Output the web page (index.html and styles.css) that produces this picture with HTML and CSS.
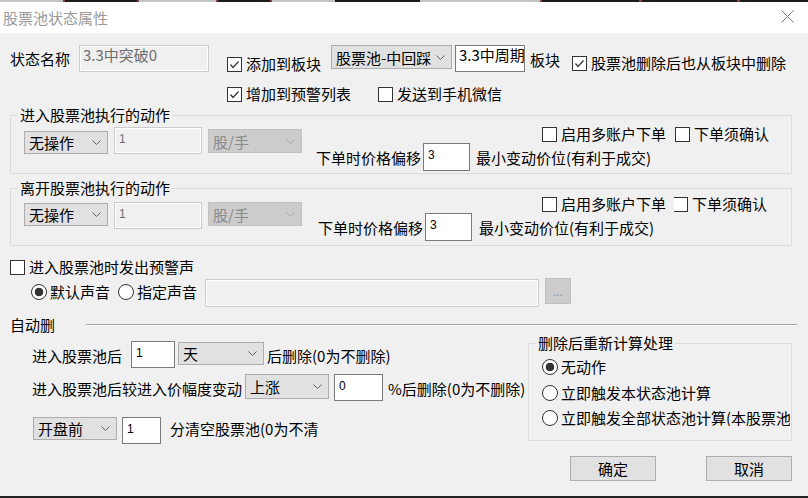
FILE: index.html
```html
<!DOCTYPE html>
<html lang="zh-CN">
<head>
<meta charset="utf-8">
<title>股票池状态属性</title>
<link rel="stylesheet" href="styles.css">
</head>
<body>
<div class="strip"></div>
<div class="titlebar">
  <span class="title">股票池状态属性</span>
  <svg class="close" width="13" height="13" viewBox="0 0 13 13"><path d="M0.5 0.5 L12.5 12.5 M12.5 0.5 L0.5 12.5" stroke="#7a7a7a" stroke-width="1" fill="none"/></svg>
</div>
<div class="dialog">
  <div class="row r1">
    <span class="lbl name-lbl">状态名称</span>
    <div class="inp dis name-inp">3.3中突破0</div>
    <div class="chk add-board"><span class="cb"><svg width="13" height="13" viewBox="0 0 13 13"><path d="M2.5 6.5 L5 9.5 L10.5 3.5" stroke="#333" stroke-width="1.2" fill="none"/></svg></span><span>添加到板块</span></div>
    <div class="sel board-sel"><span>股票池-中回踩</span><svg class="chev" width="9" height="5" viewBox="0 0 9 5"><path d="M0.5 0.5 L4.5 4.5 L8.5 0.5" stroke="#606060" fill="none"/></svg></div>
    <div class="inp period-inp">3.3中周期</div>
    <span class="lbl board-lbl">板块</span>
    <div class="chk del-too"><span class="cb"><svg width="13" height="13" viewBox="0 0 13 13"><path d="M2.5 6.5 L5 9.5 L10.5 3.5" stroke="#333" stroke-width="1.2" fill="none"/></svg></span><span>股票池删除后也从板块中删除</span></div>
  </div>

  <div class="row r2">
    <div class="chk warn-list"><span class="cb"><svg width="13" height="13" viewBox="0 0 13 13"><path d="M2.5 6.5 L5 9.5 L10.5 3.5" stroke="#333" stroke-width="1.2" fill="none"/></svg></span><span>增加到预警列表</span></div>
    <div class="chk wx"><span class="cb"></span><span>发送到手机微信</span></div>
  </div>

  <fieldset class="grp g1">
    <legend>进入股票池执行的动作</legend>
    <div class="gbody">
      <div class="sel s-act"><span>无操作</span><svg class="chev" width="9" height="5" viewBox="0 0 9 5"><path d="M0.5 0.5 L4.5 4.5 L8.5 0.5" stroke="#606060" fill="none"/></svg></div>
      <div class="inp dis num s-qty">1</div>
      <div class="sel dis s-unit"><span>股/手</span><svg class="chev" width="9" height="5" viewBox="0 0 9 5"><path d="M0.5 0.5 L4.5 4.5 L8.5 0.5" stroke="#a8a8a8" fill="none"/></svg></div>
      <div class="right">
        <div class="chkrow">
          <div class="chk"><span class="cb"></span><span>启用多账户下单</span></div>
          <div class="chk confirm"><span class="cb"></span><span>下单须确认</span></div>
        </div>
        <div class="offrow">
          <span class="lbl">下单时价格偏移</span>
          <div class="inp num off-inp">3</div>
          <span class="lbl tick-lbl">最小变动价位(有利于成交)</span>
        </div>
      </div>
    </div>
  </fieldset>

  <fieldset class="grp g2">
    <legend>离开股票池执行的动作</legend>
    <div class="gbody">
      <div class="sel s-act"><span>无操作</span><svg class="chev" width="9" height="5" viewBox="0 0 9 5"><path d="M0.5 0.5 L4.5 4.5 L8.5 0.5" stroke="#606060" fill="none"/></svg></div>
      <div class="inp dis num s-qty">1</div>
      <div class="sel dis s-unit"><span>股/手</span><svg class="chev" width="9" height="5" viewBox="0 0 9 5"><path d="M0.5 0.5 L4.5 4.5 L8.5 0.5" stroke="#a8a8a8" fill="none"/></svg></div>
      <div class="right">
        <div class="chkrow">
          <div class="chk"><span class="cb"></span><span>启用多账户下单</span></div>
          <div class="chk confirm"><span class="cb cut"></span><span>下单须确认</span></div>
        </div>
        <div class="offrow">
          <span class="lbl">下单时价格偏移</span>
          <div class="inp num off-inp">3</div>
          <span class="lbl tick-lbl">最小变动价位(有利于成交)</span>
        </div>
      </div>
    </div>
  </fieldset>

  <div class="chk sound-chk"><span class="cb"></span><span>进入股票池时发出预警声</span></div>

  <div class="row sound-row">
    <div class="rad r-default"><span class="rd on"></span><span>默认声音</span></div>
    <div class="rad r-custom"><span class="rd"></span><span>指定声音</span></div>
    <div class="inp dis path-inp"></div>
    <div class="dots">...</div>
  </div>

  <div class="row auto-row">
    <span class="auto-lbl">自动删</span>
    <div class="sep"></div>
  </div>

  <div class="bottom">
    <div class="lcol">
      <div class="row ra">
        <span class="lbl ra-lbl">进入股票池后</span>
        <div class="inp num ra-inp">1</div>
        <div class="sel ra-sel"><span>天</span><svg class="chev" width="9" height="5" viewBox="0 0 9 5"><path d="M0.5 0.5 L4.5 4.5 L8.5 0.5" stroke="#606060" fill="none"/></svg></div>
        <span class="lbl ra-tail">后删除(0为不删除)</span>
      </div>
      <div class="row rb">
        <span class="lbl rb-lbl">进入股票池后较进入价幅度变动</span>
        <div class="sel rb-sel"><span>上涨</span><svg class="chev" width="9" height="5" viewBox="0 0 9 5"><path d="M0.5 0.5 L4.5 4.5 L8.5 0.5" stroke="#606060" fill="none"/></svg></div>
        <div class="inp num rb-inp">0</div>
        <span class="lbl rb-tail">%后删除(0为不删除)</span>
      </div>
      <div class="row rc">
        <div class="sel rc-sel"><span>开盘前</span><svg class="chev" width="9" height="5" viewBox="0 0 9 5"><path d="M0.5 0.5 L4.5 4.5 L8.5 0.5" stroke="#606060" fill="none"/></svg></div>
        <div class="inp num rc-inp">1</div>
        <span class="lbl rc-tail">分清空股票池(0为不清</span>
      </div>
    </div>
    <div class="rcol">
      <fieldset class="grp g3">
        <legend>删除后重新计算处理</legend>
        <div class="radlist">
          <div class="rad"><span class="rd on"></span><span>无动作</span></div>
          <div class="rad r2nd"><span class="rd"></span><span>立即触发本状态池计算</span></div>
          <div class="rad r3rd"><span class="rd"></span><span class="clip">立即触发全部状态池计算(本股票池</span></div>
        </div>
      </fieldset>
      <div class="btns">
        <div class="btn ok">确定</div>
        <div class="btn cancel">取消</div>
      </div>
    </div>
  </div>
</div>
<div class="bottomline"></div>
</body>
</html>
```
FILE: styles.css
```css
* { box-sizing: border-box; }
html, body { margin: 0; padding: 0; }
body {
  width: 808px;
  height: 498px;
  overflow: hidden;
  font-family: "Noto Sans CJK SC", "Microsoft YaHei", sans-serif;
  font-size: 15px;
  color: #000;
  background: #f0f0f0;
}

.strip {
  height: 2px;
  background: linear-gradient(to right,
    #c4c4c4 0, #c4c4c4 63px, #8a3c3c 63px, #8a3c3c 65px,
    #1c1c1c 65px, #1c1c1c 137px, #8a3c3c 137px, #8a3c3c 139px,
    #c4c4c4 139px, #c4c4c4 216px, #8a3c3c 216px, #8a3c3c 218px,
    #1c1c1c 218px, #1c1c1c 270px, #8a3c3c 270px, #8a3c3c 272px,
    #c4c4c4 272px, #c4c4c4 335px, #1c1c1c 335px, #1c1c1c 420px,
    #c4c4c4 420px, #c4c4c4 540px, #8a3c3c 540px, #8a3c3c 542px,
    #1c1c1c 542px, #1c1c1c 639px, #8a3c3c 639px, #8a3c3c 642px,
    #1c1c1c 642px, #1c1c1c 737px, #8a3c3c 737px, #8a3c3c 740px,
    #1c1c1c 740px);
}

.titlebar {
  height: 31px;
  background: #fff;
  display: flex;
  align-items: center;
  justify-content: space-between;
}
.title {
  color: #9a9a9a;
  margin-left: 3px;
  margin-top: 1px;
  line-height: 16px;
  white-space: nowrap;
}
.close { margin-right: 14px; margin-top: -2px; }

.dialog {
  height: 463px;
  background: #f0f0f0;
  display: flex;
  flex-direction: column;
}
.bottomline { height: 2px; background: #222; }

.row { display: flex; align-items: flex-start; }
.lbl { line-height: 27px; white-space: nowrap; }

/* inputs */
.inp {
  height: 27px;
  border: 1px solid #7a7a7a;
  background: #fff;
  padding: 0 3px;
  line-height: 18px;
  white-space: nowrap;
  overflow: hidden;
  flex: none;
}
.inp.num {
  font-family: "Liberation Sans", Arial, sans-serif;
  font-size: 12px;
  line-height: 14px;
  padding: 4px 4px;
}
.inp.dis {
  background: #f0f0f0;
  border-color: #cccccc;
  box-shadow: inset 0 0 0 1px #fff;
  color: #6d6d6d;
}

/* selects */
.sel {
  display: flex;
  align-items: center;
  justify-content: space-between;
  border: 1px solid #adadad;
  background: #e1e1e1;
  padding: 0 6px 0 4px;
  white-space: nowrap;
  flex: none;
}
.sel.dis { background: #cccccc; border-color: #c2c2c2; color: #8a8a8a; }
.chev { flex: none; }

/* checkbox / radio */
.chk, .rad {
  display: flex;
  align-items: center;
  line-height: 16px;
  white-space: nowrap;
  flex: none;
}
.cb {
  width: 15px;
  height: 15px;
  border: 1px solid #333;
  background: #fff;
  margin-right: 4px;
  flex: none;
  display: flex;
  align-items: center;
  justify-content: center;
}
.cb.cut { border-left: none; width: 14px; margin-left: 1px; }
.rd {
  width: 16px;
  height: 16px;
  border-radius: 50%;
  border: 1px solid #333;
  background: #fff;
  margin-right: 3px;
  flex: none;
}
.rd.on { background: radial-gradient(circle, #333 0, #333 4px, #fff 4.6px); }

/* row 1 */
.r1 { margin-top: 12px; height: 27px; }
.name-lbl { margin-left: 10px; width: 69px; }
.name-inp { width: 130px; }
.add-board { margin-left: 18px; margin-top: 11px; }
.board-sel { margin-left: 10px; width: 121px; height: 24px; }
.period-inp { margin-left: 3px; width: 70px; }
.board-lbl { margin-left: 5px; margin-top: 1px; }
.del-too { margin-left: 12px; margin-top: 10px; }

/* row 2 */
.r2 { margin-top: 14px; }
.warn-list { margin-left: 227px; }
.wx { margin-left: 27px; }

/* group boxes */
.grp {
  margin: 0;
  padding: 0;
  border: 1px solid #dcdcdc;
  min-width: 0;
}
.grp legend {
  padding: 0 2px 0 3px;
  margin-left: 6px;
  line-height: 16px;
  white-space: nowrap;
}
.g1, .g2 { margin-left: 10px; width: 782px; }
.g1 { margin-top: 5px; }
.g2 { margin-top: 6px; }
.gbody { display: flex; align-items: flex-start; }
.g1 .gbody { padding-bottom: 2px; }
.g2 .gbody { padding-bottom: 4px; }

.s-act { margin-left: 13px; width: 84px; height: 23px; }
.s-qty { margin-left: 6px; width: 88px; }
.s-unit { margin-left: 6px; width: 94px; height: 24px; }
.g1 .s-act { margin-top: 8px; }
.g1 .s-qty { margin-top: 4px; }
.g1 .s-unit { margin-top: 6px; }
.g2 .s-act { margin-top: 7px; }
.g2 .s-qty { margin-top: 6px; }
.g2 .s-unit { margin-top: 6px; }

.right { display: flex; flex-direction: column; }
.g1 .right { margin-left: 14px; margin-top: 3px; }
.g2 .right { margin-left: 16px; margin-top: 0; }
.chkrow { display: flex; }
.g1 .chkrow { padding-left: 226px; }
.g2 .chkrow { padding-left: 224px; }
.confirm { margin-left: 9px; }
.g2 .confirm { margin-left: 7px; }
.offrow { display: flex; align-items: center; margin-top: 1px; }
.off-inp { margin-left: 2px; width: 47px; height: 28px; }
.tick-lbl { margin-left: 6px; }
.g2 .tick-lbl { margin-left: 7px; }

/* sound */
.sound-chk { margin-top: 13px; margin-left: 10px; align-self: flex-start; }
.sound-row { margin-top: 3px; }
.r-default { margin-left: 31px; margin-top: 6px; }
.r-custom { margin-left: 8px; margin-top: 6px; }
.path-inp { margin-left: 8px; margin-top: 1px; width: 334px; height: 28px; }
.dots {
  margin-left: 6px;
  width: 26px;
  height: 26px;
  background: #cccccc;
  border: 1px solid #bfbfbf;
  color: #7d8ea0;
  font-family: "Liberation Sans", Arial, sans-serif;
  font-size: 12px;
  line-height: 26px;
  text-align: center;
  flex: none;
}

/* auto delete */
.auto-row { margin-top: 9px; height: 18px; align-items: center; }
.auto-lbl { margin-left: 10px; line-height: 18px; white-space: nowrap; }
.sep {
  flex: 1;
  margin-left: 31px;
  margin-right: 11px;
  height: 2px;
  border-top: 1px solid #a0a0a0;
  border-bottom: 1px solid #fff;
}

.bottom { display: flex; margin-top: 1px; }
.lcol { width: 528px; flex: none; }
.ra { margin-top: 6px; }
.ra-lbl { margin-left: 32px; margin-right: 9px; margin-top: 1px; }
.ra-inp { width: 44px; }
.ra-sel { margin-left: 3px; margin-top: 1px; width: 86px; height: 23px; }
.ra-tail { margin-left: 3px; margin-top: 1px; }
.rb { margin-top: 5px; }
.rb-lbl { margin-left: 32px; margin-top: 1px; }
.rb-sel { margin-left: 3px; width: 84px; height: 25px; }
.rb-inp { margin-left: 5px; width: 49px; }
.rb-tail { margin-left: 5px; margin-top: 1px; }
.rc { margin-top: 15px; }
.rc-sel { margin-left: 33px; width: 84px; height: 23px; }
.rc-inp { margin-left: 5px; width: 39px; }
.rc-tail { margin-left: 9px; margin-top: -2px; }

.rcol { width: 264px; flex: none; }
.g3 { width: 264px; }
.radlist { padding: 8px 0 14px 13px; display: flex; flex-direction: column; }
.r2nd { margin-top: 10px; }
.r3rd { margin-top: 9px; width: 248px; overflow: hidden; }
.clip { overflow: hidden; white-space: nowrap; }

.btns { display: flex; margin-top: 15px; }
.btn {
  width: 86px;
  height: 25px;
  border: 1px solid #adadad;
  background: #e1e1e1;
  text-align: center;
  line-height: 23px;
}
.ok { margin-left: 42px; }
.cancel { margin-left: 50px; }
```
